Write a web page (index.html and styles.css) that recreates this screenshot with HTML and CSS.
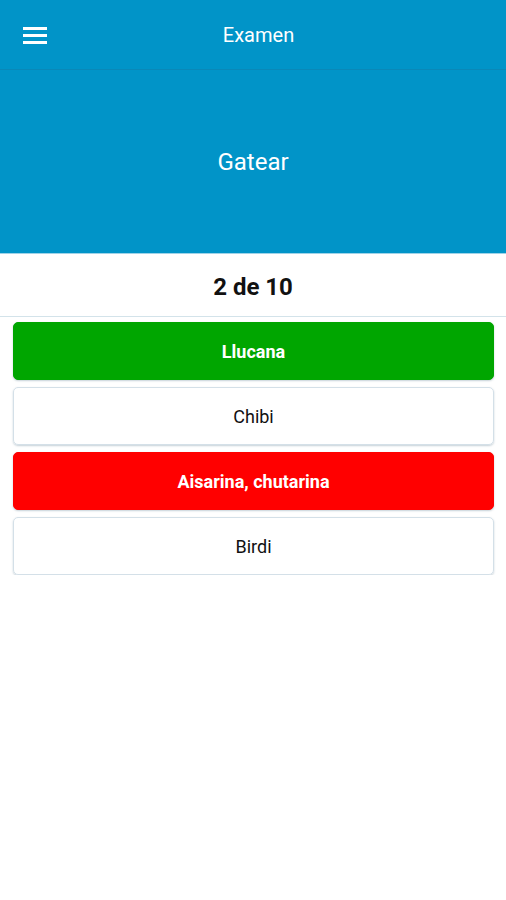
FILE: index.html
```html
<!DOCTYPE html>
<html lang="es">
<head>
    <meta charset="UTF-8">
    <meta name="viewport" content="width=device-width, initial-scale=1.0">
    <title>Examen</title>
    <link rel="stylesheet" href="styles.css">
</head>
<body>
    <div class="topbar">
        <div class="menu-btn">
            <svg width="24" height="18" viewBox="0 0 24 18">
                <rect x="0" y="1" width="24" height="3" fill="#fff"/>
                <rect x="0" y="8" width="24" height="3" fill="#fff"/>
                <rect x="0" y="15" width="24" height="3" fill="#fff"/>
            </svg>
        </div>
        <div class="title">Examen</div>
    </div>

    <div class="word-box">
        <div class="word">Gatear</div>
    </div>

    <div class="counter">2 de 10</div>

    <div class="answers">
        <div class="answer correct">Llucana</div>
        <div class="answer">Chibi</div>
        <div class="answer wrong">Aisarina, chutarina</div>
        <div class="answer">Birdi</div>
    </div>
</body>
</html>
```

FILE: styles.css
```css
body {
    margin: 0;
    font-family: Roboto, "Noto Sans", Arial, sans-serif;
    background-color: #fff;
}

.topbar {
    height: 69px;
    background-color: #0194c8;
    border-bottom: 1px solid #0a88b8;
    display: flex;
    align-items: center;
}

.menu-btn {
    width: 24px;
    height: 18px;
    margin-left: 23px;
    margin-top: 1px;
}

.menu-btn svg {
    display: block;
}

.title {
    flex: 1;
    text-align: center;
    color: #fff;
    font-size: 20px;
    margin-right: 36px;
}

.word-box {
    height: 184px;
    background-color: #0194c8;
    border-bottom: 1px solid #9fd3e8;
    display: flex;
    justify-content: center;
    padding-top: 78px;
    box-sizing: border-box;
}

.word {
    color: #fff;
    font-size: 24px;
    line-height: 28px;
}

.counter {
    height: 63px;
    box-sizing: border-box;
    padding-top: 4px;
    line-height: 58px;
    text-align: center;
    font-size: 24px;
    font-weight: bold;
    color: #111;
    border-bottom: 1px solid #d3e3ea;
}

.answers {
    display: flex;
    flex-direction: column;
    gap: 7px;
    padding: 5px 12px 0 13px;
}

.answer {
    height: 58px;
    box-sizing: border-box;
    border-radius: 5px;
    border: 1px solid #d4e0e8;
    box-shadow: 0 1px 2px rgba(90, 120, 140, 0.35);
    display: flex;
    align-items: center;
    justify-content: center;
    font-size: 18px;
    color: #111;
}

.answer.correct {
    background-color: #00a600;
    border-color: #00a600;
    color: #fff;
    font-weight: bold;
}

.answer.wrong {
    background-color: #ff0000;
    border-color: #ff0000;
    color: #fff;
    font-weight: bold;
}
```
